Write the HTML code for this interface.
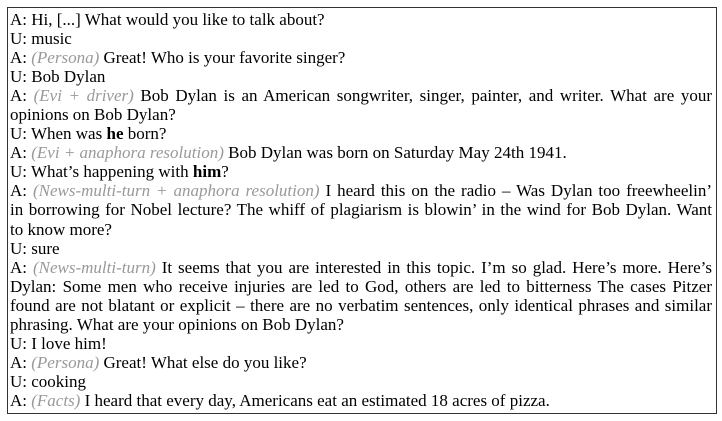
<html><head><style>
body{margin:0;background:#fff;}
.box{position:absolute;left:7px;top:7px;width:710px;height:407px;border:1px solid #333;box-sizing:border-box;}
.t{position:absolute;left:10px;top:10px;width:702px;font-family:"Liberation Serif",serif;font-size:17px;line-height:19.05px;color:#000;}
.t div{white-space:nowrap;}
.j{text-align:justify;text-align-last:justify;white-space:normal!important;}
i{color:#999;}
</style></head><body>
<div class="box"></div>
<div class="t">
<div>A: Hi, [...] What would you like to talk about?</div>
<div>U: music</div>
<div>A: <i>(Persona)</i> Great! Who is your favorite singer?</div>
<div>U: Bob Dylan</div>
<div class="j">A: <i>(Evi + driver)</i> Bob Dylan is an American songwriter, singer, painter, and writer. What are your</div>
<div>opinions on Bob Dylan?</div>
<div>U: When was <b>he</b> born?</div>
<div>A: <i>(Evi + anaphora resolution)</i> Bob Dylan was born on Saturday May 24th 1941.</div>
<div>U: What’s happening with <b>him</b>?</div>
<div class="j">A: <i>(News-multi-turn + anaphora resolution)</i> I heard this on the radio – Was Dylan too freewheelin’</div>
<div class="j">in borrowing for Nobel lecture? The whiff of plagiarism is blowin’ in the wind for Bob Dylan. Want</div>
<div>to know more?</div>
<div>U: sure</div>
<div class="j">A: <i>(News-multi-turn)</i> It seems that you are interested in this topic. I’m so glad. Here’s more. Here’s</div>
<div class="j">Dylan: Some men who receive injuries are led to God, others are led to bitterness The cases Pitzer</div>
<div class="j">found are not blatant or explicit – there are no verbatim sentences, only identical phrases and similar</div>
<div>phrasing. What are your opinions on Bob Dylan?</div>
<div>U: I love him!</div>
<div>A: <i>(Persona)</i> Great! What else do you like?</div>
<div>U: cooking</div>
<div>A: <i>(Facts)</i> I heard that every day, Americans eat an estimated 18 acres of pizza.</div>
</div>
</body></html>
